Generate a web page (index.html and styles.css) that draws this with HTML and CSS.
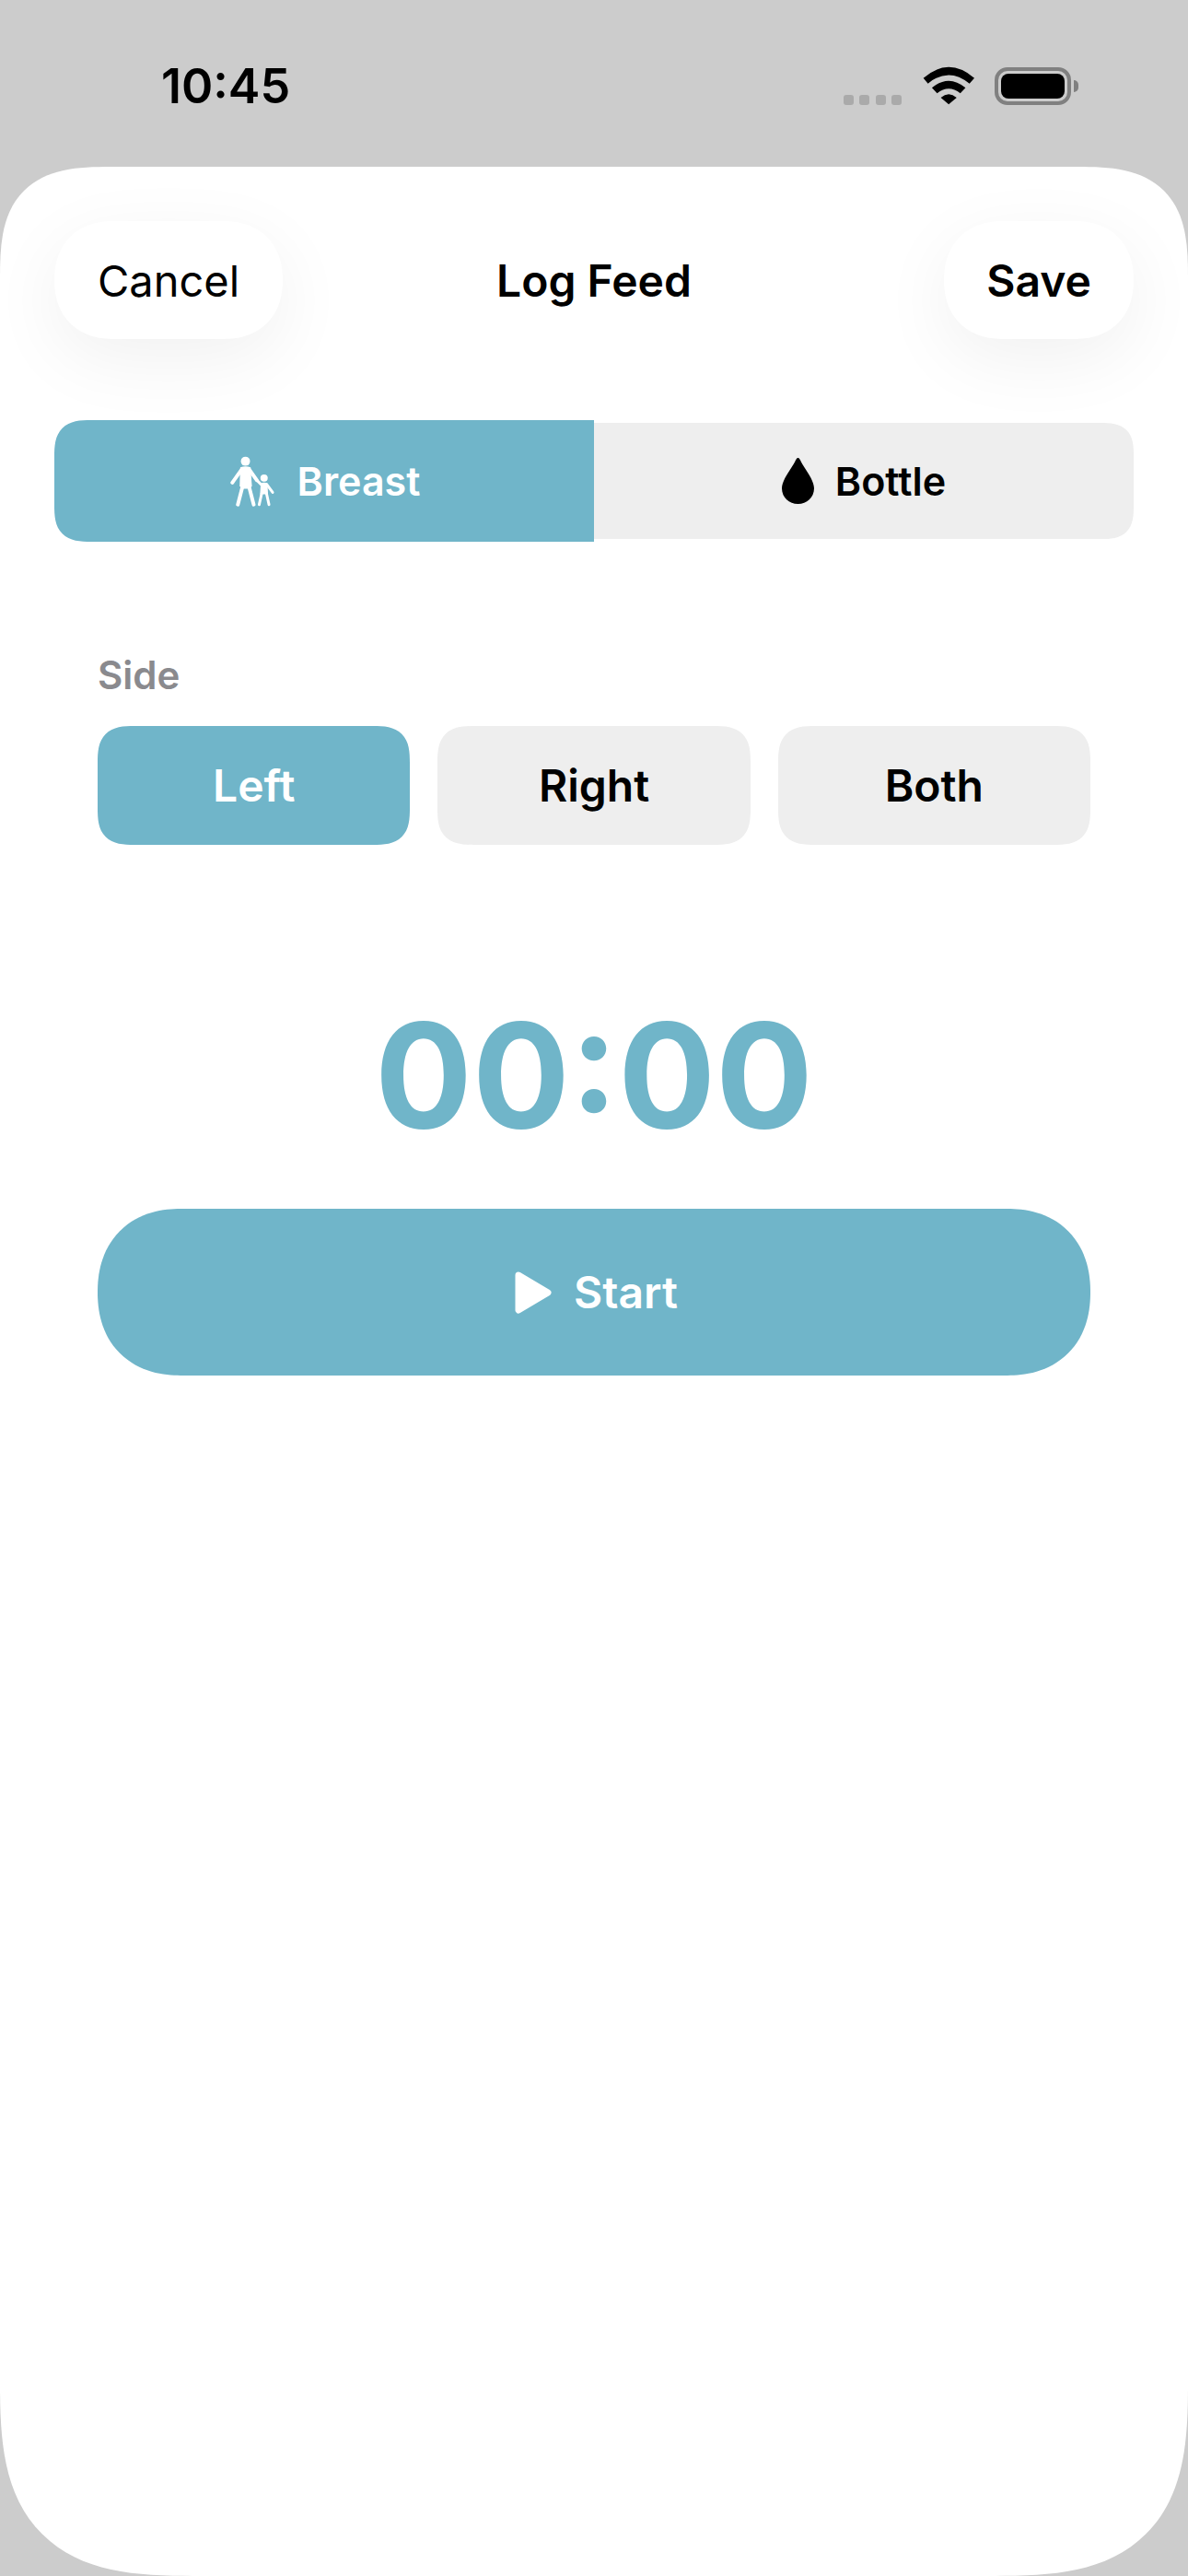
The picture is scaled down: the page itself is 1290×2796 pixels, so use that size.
FILE: index.html
```html
<!DOCTYPE html><html>
<head>
<title>Log Feed</title>
<link rel="stylesheet" href="styles.css">
</head>
<body>

<div class="status_bar">
	<span class="time">10:45</span>
	<div class="status_icons">
		<div class="signal"><i></i><i></i><i></i><i></i></div>
		<svg class="wifi" viewBox="360 68 178 126">
			<path d="M365 106 Q448 34 532 106 L516 124 Q448 68 380 124 Z"/>
			<path d="M393 138 Q448 92 503 138 L486 156 Q448 126 410 156 Z"/>
			<path d="M422 170 Q448 148 474 170 L448 192 Z"/>
		</svg>
		<div class="battery">
			<div class="battery_shell"><div class="battery_level"></div></div>
			<div class="battery_cap"></div>
		</div>
	</div>
</div>

<div class="sheet">
	<div class="sheet_header">
		<button class="pill cancel">Cancel</button>
		<span class="title">Log Feed</span>
		<button class="pill save">Save</button>
	</div>

	<div class="segment">
		<div class="segment_item active">
			<svg class="icon_people" viewBox="150 70 155 172">
				<circle cx="205" cy="90" r="15" class="solid"/>
				<path d="M188 110 Q205 104 222 110 L226 170 L220 180 H192 L186 170 Z" class="solid"/>
				<path d="M192 118 L162 160 M218 118 L242 152 M196 170 L180 232 M216 170 L232 232" class="limb"/>
				<circle cx="266" cy="145" r="12" class="solid"/>
				<path d="M255 162 Q266 158 277 162 L279 198 H253 Z" class="solid"/>
				<path d="M258 168 L242 152 M275 166 L294 192 M258 196 L250 232 M274 196 L282 232" class="limb_small"/>
			</svg>
			<span>Breast</span>
		</div>
		<div class="segment_item">
			<svg class="icon_drop" viewBox="0 0 35 50">
				<path d="M17.5 0 C19 0 19.5 1.5 21 4.5 C25 12 35 24 35 33 C35 43 27 50 17.5 50 C8 50 0 43 0 33 C0 24 10 12 14 4.5 C15.5 1.5 16 0 17.5 0 Z"/>
			</svg>
			<span>Bottle</span>
		</div>
	</div>

	<div class="content">
		<div class="label">Side</div>
		<div class="sides">
			<div class="side active">Left</div>
			<div class="side">Right</div>
			<div class="side">Both</div>
		</div>
		<div class="timer">00:00</div>
		<button class="start">
			<svg class="icon_play" viewBox="0 0 40 46">
				<path d="M4 4 L36 23 L4 42 Z"/>
			</svg>
			<span>Start</span>
		</button>
	</div>
</div>

</body></html>
```

FILE: styles.css
```css
:root {
	--color-accent: #70b5c9;
	--color-grey: #eeeeee;
}

* {box-sizing: border-box;}

body {
	display: flex;
	flex-direction: column;
	margin: 0;
	height: 2796px;
	background-color: #cccccc;
	font-family: Inter, "Liberation Sans", sans-serif;
	color: #000;
}

button {
	border: 0;
	padding: 0;
	font-family: inherit;
	color: inherit;
}

.status_bar {
	display: flex;
	justify-content: space-between;
	align-items: flex-end;
	height: 181px;
	padding: 0 119px 67px 175px;
}
.time {font-size: 52px; font-weight: 600; line-height: 52px; margin-bottom: -6px;}
.status_icons {display: flex; align-items: flex-end;}
.signal {display: flex; gap: 6.5px; margin-right: 22px;}
.signal i {width: 11px; height: 11px; border-radius: 3px; background: #aaaaaa;}
.wifi {width: 59px; height: 42px; margin-right: 20px; display: block;}
.battery {display: flex; align-items: center;}
.battery_shell {
	width: 83px;
	height: 41px;
	padding: 3px;
	border: 4px solid #808080;
	border-radius: 14px;
}
.battery_level {height: 100%; border-radius: 8px; background: #000;}
.battery_cap {
	width: 5px;
	height: 13px;
	margin-left: 3px;
	border-radius: 0 5px 5px 0;
	background: #808080;
}

.sheet {
	flex: 1;
	padding-top: 59px;
	background: #fff;
	border-radius: 120px 120px 210px 210px;
	corner-shape: superellipse(1.5);
}

.sheet_header {
	position: relative;
	z-index: 1;
	display: grid;
	grid-template-columns: 1fr auto 1fr;
	align-items: center;
	padding: 0 59px;
}
.pill {
	height: 128px;
	border-radius: 64px;
	corner-shape: superellipse(1.15);
	background: #fff;
	box-shadow: 0 22px 80px rgba(0, 0, 0, .06);
	font-size: 48px;
}
.cancel {width: 248px; justify-self: start; font-size: 47px; font-weight: 400;}
.save {width: 206px; justify-self: end; font-weight: 600;}
.title {font-size: 48px; font-weight: 600;}

.segment {
	display: grid;
	grid-template-columns: 586px 586px;
	align-items: center;
	margin: 88px 59px 0;
}
.segment_item {
	display: flex;
	justify-content: center;
	align-items: center;
	gap: 23px;
	height: 126px;
	background: var(--color-grey);
	border-radius: 0 36px 36px 0;
	corner-shape: superellipse(1.5);
	font-size: 43px;
	font-weight: 600;
}
.segment_item.active {
	height: 132px;
	background: var(--color-accent);
	border-radius: 40px 0 0 40px;
	color: #fff;
}
.icon_people {width: 52px; height: 57px;}
.icon_people .solid {fill: #fff;}
.icon_people .limb {fill: none; stroke: #fff; stroke-width: 12; stroke-linecap: round;}
.icon_people .limb_small {fill: none; stroke: #fff; stroke-width: 9; stroke-linecap: round;}
.icon_drop {width: 35px; height: 50px;}

.content {padding: 0 106px;}
.label {
	margin-top: 120px;
	font-size: 42px;
	font-weight: 600;
	line-height: 50px;
	color: #8a8a8e;
}
.sides {
	display: grid;
	grid-template-columns: repeat(3, 1fr);
	gap: 30px;
	margin-top: 30px;
}
.side {
	display: flex;
	justify-content: center;
	align-items: center;
	height: 129px;
	background: var(--color-grey);
	border-radius: 40px;
	corner-shape: superellipse(1.5);
	font-size: 48px;
	font-weight: 600;
}
.side.active {background: var(--color-accent); color: #fff;}

.timer {
	margin-top: 150px;
	font-size: 157px;
	font-weight: 700;
	line-height: 200px;
	text-align: center;
	color: var(--color-accent);
}
.start {
	display: flex;
	justify-content: center;
	align-items: center;
	gap: 24px;
	width: 100%;
	height: 181px;
	margin-top: 45px;
	padding-left: 5px;
	background: var(--color-accent);
	border-radius: 90px;
	corner-shape: superellipse(1.15);
	font-size: 48px;
	font-weight: 600;
	color: #fff;
}
.icon_play {width: 40px; height: 46px;}
.icon_play path {fill: #fff; stroke: #fff; stroke-width: 7; stroke-linejoin: round;}
```
